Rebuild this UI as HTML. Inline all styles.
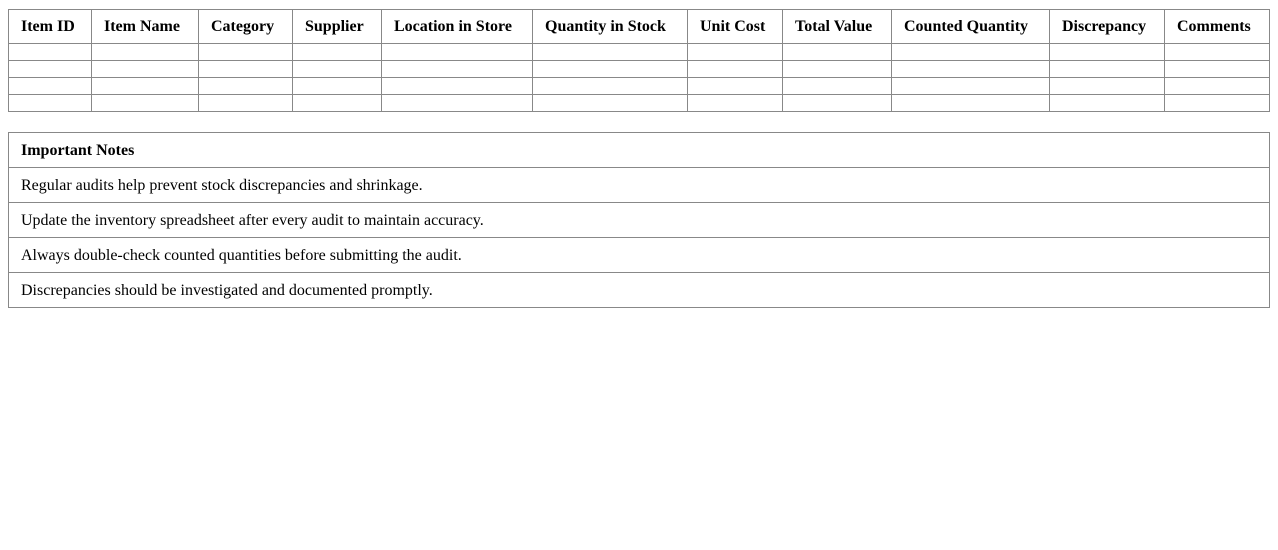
<!DOCTYPE html>
<html><head><style>
body{margin:0;background:#fff;font-family:"Liberation Serif",serif;font-size:16px;color:#000}
table{border-collapse:collapse;table-layout:fixed;position:absolute;left:8px}
td,th{border:1px solid #888;padding:0 12px;white-space:nowrap;overflow:hidden;line-height:18px}
#t1{top:9px;width:1262px}
#t1 th{height:32px;text-align:left;font-weight:bold;padding-top:1px}
#t1 td{height:16px;padding:0;line-height:10px;font-size:1px}
#t2{top:132px;width:1262px}
#t2 td{height:33px;padding-top:1px}
</style></head><body>
<table id="t1">
<colgroup><col style="width:83px"><col style="width:107px"><col style="width:94px"><col style="width:89px"><col style="width:151px"><col style="width:155px"><col style="width:95px"><col style="width:109px"><col style="width:158px"><col style="width:115px"><col style="width:105px"></colgroup>
<tr><th>Item ID</th><th>Item Name</th><th>Category</th><th>Supplier</th><th>Location in Store</th><th>Quantity in Stock</th><th>Unit Cost</th><th>Total Value</th><th>Counted Quantity</th><th>Discrepancy</th><th>Comments</th></tr>
<tr><td></td><td></td><td></td><td></td><td></td><td></td><td></td><td></td><td></td><td></td><td></td></tr>
<tr><td></td><td></td><td></td><td></td><td></td><td></td><td></td><td></td><td></td><td></td><td></td></tr>
<tr><td></td><td></td><td></td><td></td><td></td><td></td><td></td><td></td><td></td><td></td><td></td></tr>
<tr><td></td><td></td><td></td><td></td><td></td><td></td><td></td><td></td><td></td><td></td><td></td></tr>
</table>
<table id="t2">
<tr><td><b>Important Notes</b></td></tr>
<tr><td>Regular audits help prevent stock discrepancies and shrinkage.</td></tr>
<tr><td>Update the inventory spreadsheet after every audit to maintain accuracy.</td></tr>
<tr><td>Always double-check counted quantities before submitting the audit.</td></tr>
<tr><td>Discrepancies should be investigated and documented promptly.</td></tr>
</table>
</body></html>
